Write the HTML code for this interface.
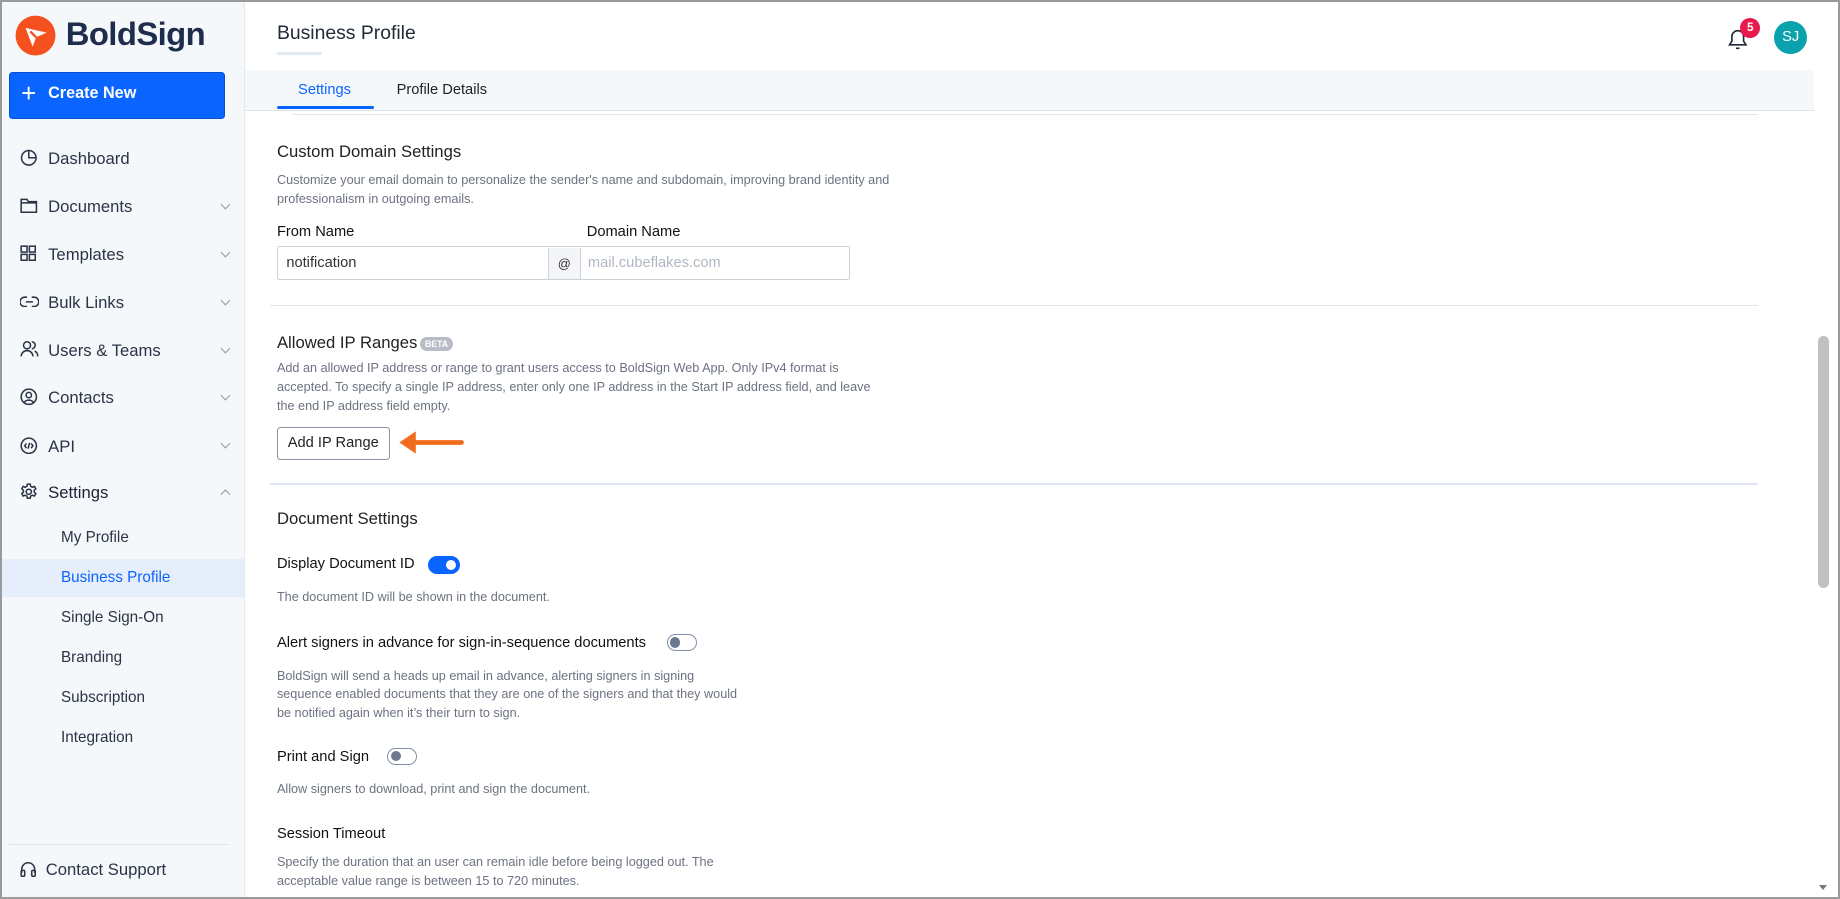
<!DOCTYPE html>
<html><head><meta charset="utf-8"><style>
html,body{margin:0;padding:0;background:#fff;overflow:hidden}
#r{position:relative;width:1568px;height:766px;zoom:1.17347;font-family:"Liberation Sans",sans-serif;overflow:hidden;background:#fff}
.a{position:absolute;white-space:nowrap}
.nav{position:absolute;left:41px;font-size:14.2px;color:#2b3445}
.ic{position:absolute;left:17px}
.chev{position:absolute;left:189px;width:5px;height:5px;border-right:1px solid #8a94a3;border-bottom:1px solid #8a94a3;transform:rotate(45deg)}
.sub{position:absolute;left:52px;font-size:13px;color:#2b3445}
.h{position:absolute;left:236px;font-size:14.2px;color:#222}
.d{position:absolute;left:236px;font-size:10.8px;color:#6b7280;line-height:16px}
.l{position:absolute;left:236px;font-size:12.5px;color:#111;font-weight:500}
.hr{position:absolute;left:230px;width:1268px;height:1px;background:#e1e7ee}
.tg{position:absolute;width:24px;height:13px;border:1px solid #8090a8;border-radius:8px;background:#fff}
.tg i{position:absolute;left:2px;top:2px;width:9px;height:9px;border-radius:50%;background:#6b7890}
</style></head><body><div id="r">
<div class="a" style="left:0;top:0;width:208px;height:766px;background:#f5f8fb;border-right:1px solid #e3e8ee"></div>
<svg class="a" style="left:13px;top:13px" width="35" height="35" viewBox="0 0 35 35"><circle cx="17.5" cy="17.5" r="17" fill="#f4511e"/><path d="M9 11 L27 15 L18 19 L15 27 Z" fill="#fff"/><path d="M18 19 L13 14" stroke="#f4511e" stroke-width="2"/></svg>
<div class="a" style="left:56px;top:13px;font-size:28px;font-weight:bold;color:#1f2d4d;letter-spacing:-0.5px">BoldSign</div>
<div class="a" style="left:8px;top:61px;width:184px;height:40px;background:#0a64ff;border-radius:3px;border:1px solid #0750d0;box-sizing:border-box"></div>
<div class="a" style="left:18px;top:68px;font-size:22px;color:#fff">+</div>
<div class="a" style="left:41px;top:72px;font-size:13.8px;font-weight:bold;color:#fff">Create New</div>

<svg class="ic" style="top:127px" width="15" height="15" viewBox="0 0 15 15" fill="none" stroke="#2b3445" stroke-width="1.3"><circle cx="7.5" cy="7.5" r="6.2"/><path d="M7.5 1.3V7.5H13.7"/></svg>
<div class="nav" style="top:127px">Dashboard</div>
<svg class="ic" style="top:168px" width="15" height="14" viewBox="0 0 15 14" fill="none" stroke="#2b3445" stroke-width="1.3"><path d="M1 2h5l1 2h7v9H1z"/><path d="M1 5h13"/></svg>
<div class="nav" style="top:168px">Documents</div><div class="chev" style="top:171px"></div>
<svg class="ic" style="top:209px" width="14" height="14" viewBox="0 0 14 14" fill="none" stroke="#2b3445" stroke-width="1.3"><rect x="1" y="1" width="5" height="5"/><rect x="8" y="1" width="5" height="5"/><rect x="1" y="8" width="5" height="5"/><rect x="8" y="8" width="5" height="5"/></svg>
<div class="nav" style="top:209px">Templates</div><div class="chev" style="top:212px"></div>
<svg class="ic" style="top:252px" width="16" height="10" viewBox="0 0 16 10" fill="none" stroke="#2b3445" stroke-width="1.3"><path d="M6 1H4a4 4 0 000 8h2M10 1h2a4 4 0 010 8h-2M5 5h6"/></svg>
<div class="nav" style="top:250px">Bulk Links</div><div class="chev" style="top:253px"></div>
<svg class="ic" style="top:290px" width="16" height="15" viewBox="0 0 16 15" fill="none" stroke="#2b3445" stroke-width="1.3"><circle cx="6" cy="4.5" r="3"/><path d="M1 14a5 5 0 0110 0M10 1.5a3 3 0 010 6M12.5 9.5a4 4 0 012.5 4.5"/></svg>
<div class="nav" style="top:291px">Users &amp; Teams</div><div class="chev" style="top:294px"></div>
<svg class="ic" style="top:331px" width="15" height="15" viewBox="0 0 15 15" fill="none" stroke="#2b3445" stroke-width="1.3"><circle cx="7.5" cy="7.5" r="6.5"/><circle cx="7.5" cy="6" r="2.3"/><path d="M3.5 12.5a4.5 4 0 018 0"/></svg>
<div class="nav" style="top:331px">Contacts</div><div class="chev" style="top:334px"></div>
<svg class="ic" style="top:372px" width="15" height="15" viewBox="0 0 15 15" fill="none" stroke="#2b3445" stroke-width="1.3"><circle cx="7.5" cy="7.5" r="6.5"/><path d="M5.5 5.5L4 7.5 5.5 9.5M9.5 5.5L11 7.5 9.5 9.5M8.2 5L6.8 10"/></svg>
<div class="nav" style="top:372px">API</div><div class="chev" style="top:375px"></div>
<svg class="ic" style="top:412px" width="15" height="15" viewBox="0 0 15 15" fill="none" stroke="#2b3445" stroke-width="1.3"><circle cx="7.5" cy="7.5" r="2.2"/><path d="M6.3 1h2.4l.4 1.8 1.5.8 1.7-.7 1.2 2-1.4 1.3v1.6l1.4 1.3-1.2 2-1.7-.7-1.5.8-.4 1.8H6.3l-.4-1.8-1.5-.8-1.7.7-1.2-2 1.4-1.3V6.2L1.5 4.9l1.2-2 1.7.7 1.5-.8z"/></svg>
<div class="nav" style="top:412px;color:#1a2233">Settings</div><div class="chev" style="top:418px;transform:rotate(225deg)"></div>
<div class="sub" style="top:451px">My Profile</div>
<div class="a" style="left:0;top:476px;width:208px;height:33px;background:#e6eefb"></div>
<div class="sub" style="top:485px;color:#0a64ff">Business Profile</div>
<div class="sub" style="top:519px">Single Sign-On</div>
<div class="sub" style="top:553px">Branding</div>
<div class="sub" style="top:587px">Subscription</div>
<div class="sub" style="top:621px">Integration</div>
<div class="a" style="left:8px;top:719px;width:187px;height:1px;background:#dde3ea"></div>
<svg class="ic" style="top:734px" width="14" height="14" viewBox="0 0 14 14" fill="none" stroke="#2b3445" stroke-width="1.3"><path d="M1.5 10V7a5.5 5.5 0 0111 0v3"/><rect x="1" y="8" width="3" height="5" rx="1"/><rect x="10" y="8" width="3" height="5" rx="1"/></svg>
<div class="nav" style="left:39px;top:733px">Contact Support</div>

<div class="a" style="left:236px;top:19px;font-size:16.5px;color:#1f2937">Business Profile</div>
<div class="a" style="left:236px;top:44px;width:38px;height:3px;background:#e3e9f1;border-radius:2px"></div>
<svg class="a" style="left:1471px;top:22px" width="20" height="22" viewBox="0 0 20 22" fill="none" stroke="#1f2937" stroke-width="1.4"><path d="M3 16h14l-2-3V9a5 5 0 00-10 0v4z"/><path d="M8.5 19h3"/></svg>
<div class="a" style="left:1483px;top:15px;width:17px;height:17px;border-radius:50%;background:#e8194d;color:#fff;font-size:10px;font-weight:bold;text-align:center;line-height:17px">5</div>
<div class="a" style="left:1512px;top:18px;width:28px;height:28px;border-radius:50%;background:#0aa3ad;color:#fff;font-size:12.5px;text-align:center;line-height:28px">SJ</div>
<div class="a" style="left:209px;top:60px;width:1337px;height:34px;background:#f5f8fb;border-bottom:1px solid #dde4ec"></div>
<div class="a" style="left:254px;top:70px;font-size:12.5px;color:#0a64ff;font-weight:500">Settings</div>
<div class="a" style="left:338px;top:70px;font-size:12.5px;color:#222;font-weight:500">Profile Details</div>
<div class="a" style="left:236px;top:90px;width:83px;height:3px;background:#0a64ff;border-radius:2px"></div>
<div class="a" style="left:250px;top:97px;width:1248px;height:1px;background:#e1e7ee"></div>
<div class="a" style="left:1546px;top:0;width:15px;height:766px;background:#fff"></div>
<div class="a" style="left:1549px;top:286px;width:10px;height:215px;background:#c1c1c1;border-radius:5px"></div>
<div class="a" style="left:1550px;top:754px;width:0;height:0;border-left:4px solid transparent;border-right:4px solid transparent;border-top:5px solid #777"></div>
<div class="a" style="left:1561px;top:0;width:7px;height:766px;background:#fff"></div>

<div class="h" style="top:121px">Custom Domain Settings</div>
<div class="d" style="top:146px">Customize your email domain to personalize the sender's name and subdomain, improving brand identity and<br>professionalism in outgoing emails.</div>
<div class="l" style="top:191px">From Name</div>
<div class="l" style="left:500px;top:191px">Domain Name</div>
<div class="a" style="left:236px;top:210px;width:488px;height:29px;border:1px solid #c9d1db;border-radius:2px;box-sizing:border-box"></div>
<div class="a" style="left:467px;top:211px;width:26px;height:27px;background:#f3f5f8;border-left:1px solid #c9d1db;border-right:1px solid #c9d1db;font-size:11px;color:#333;text-align:center;line-height:27px">@</div>
<div class="a" style="left:244px;top:217px;font-size:12.5px;color:#333">notification</div>
<div class="a" style="left:501px;top:217px;font-size:12.5px;color:#b0b7c2">mail.cubeflakes.com</div>
<div class="hr" style="top:260px"></div>
<div class="h" style="top:284px">Allowed IP Ranges</div>
<div class="a" style="left:358px;top:287px;width:28px;height:12px;border-radius:6px;background:#b7bcc6;color:#fff;font-size:7.5px;font-weight:bold;text-align:center;line-height:12px">BETA</div>
<div class="d" style="top:306px">Add an allowed IP address or range to grant users access to BoldSign Web App. Only IPv4 format is<br>accepted. To specify a single IP address, enter only one IP address in the Start IP address field, and leave<br>the end IP address field empty.</div>
<div class="a" style="left:236px;top:364px;width:96px;height:28px;border:1px solid #8a94a3;border-radius:3px;box-sizing:border-box;font-size:12.5px;color:#222;text-align:center;line-height:26px">Add IP Range</div>
<svg class="a" style="left:338px;top:366px" width="60" height="24" viewBox="0 0 60 24"><path d="M14 11.5H55" stroke="#f26b1d" stroke-width="4" stroke-linecap="round"/><path d="M2 11.5L16 2V21Z" fill="#f26b1d"/></svg>
<div class="hr" style="top:412px"></div>
<div class="h" style="top:434px">Document Settings</div>
<div class="l" style="top:474px">Display Document ID</div>
<div class="a" style="left:365px;top:474px;width:27px;height:15px;border-radius:8px;background:#0a64ff"><i style="position:absolute;left:15px;top:3px;width:9px;height:9px;border-radius:50%;background:#fff"></i></div>
<div class="d" style="top:501px">The document ID will be shown in the document.</div>
<div class="l" style="top:541px">Alert signers in advance for sign-in-sequence documents</div>
<div class="tg" style="left:568px;top:540px"><i></i></div>
<div class="d" style="top:568px">BoldSign will send a heads up email in advance, alerting signers in signing<br>sequence enabled documents that they are one of the signers and that they would<br>be notified again when it’s their turn to sign.</div>
<div class="l" style="top:638px">Print and Sign</div>
<div class="tg" style="left:330px;top:637px"><i></i></div>
<div class="d" style="top:665px">Allow signers to download, print and sign the document.</div>
<div class="l" style="top:704px">Session Timeout</div>
<div class="d" style="top:727px">Specify the duration that an user can remain idle before being logged out. The<br>acceptable value range is between 15 to 720 minutes.</div>
<div class="a" style="left:0;top:0;width:1568px;height:766px;border:2px solid #9a9a9a;box-sizing:border-box;pointer-events:none"></div>
</div></body></html>
